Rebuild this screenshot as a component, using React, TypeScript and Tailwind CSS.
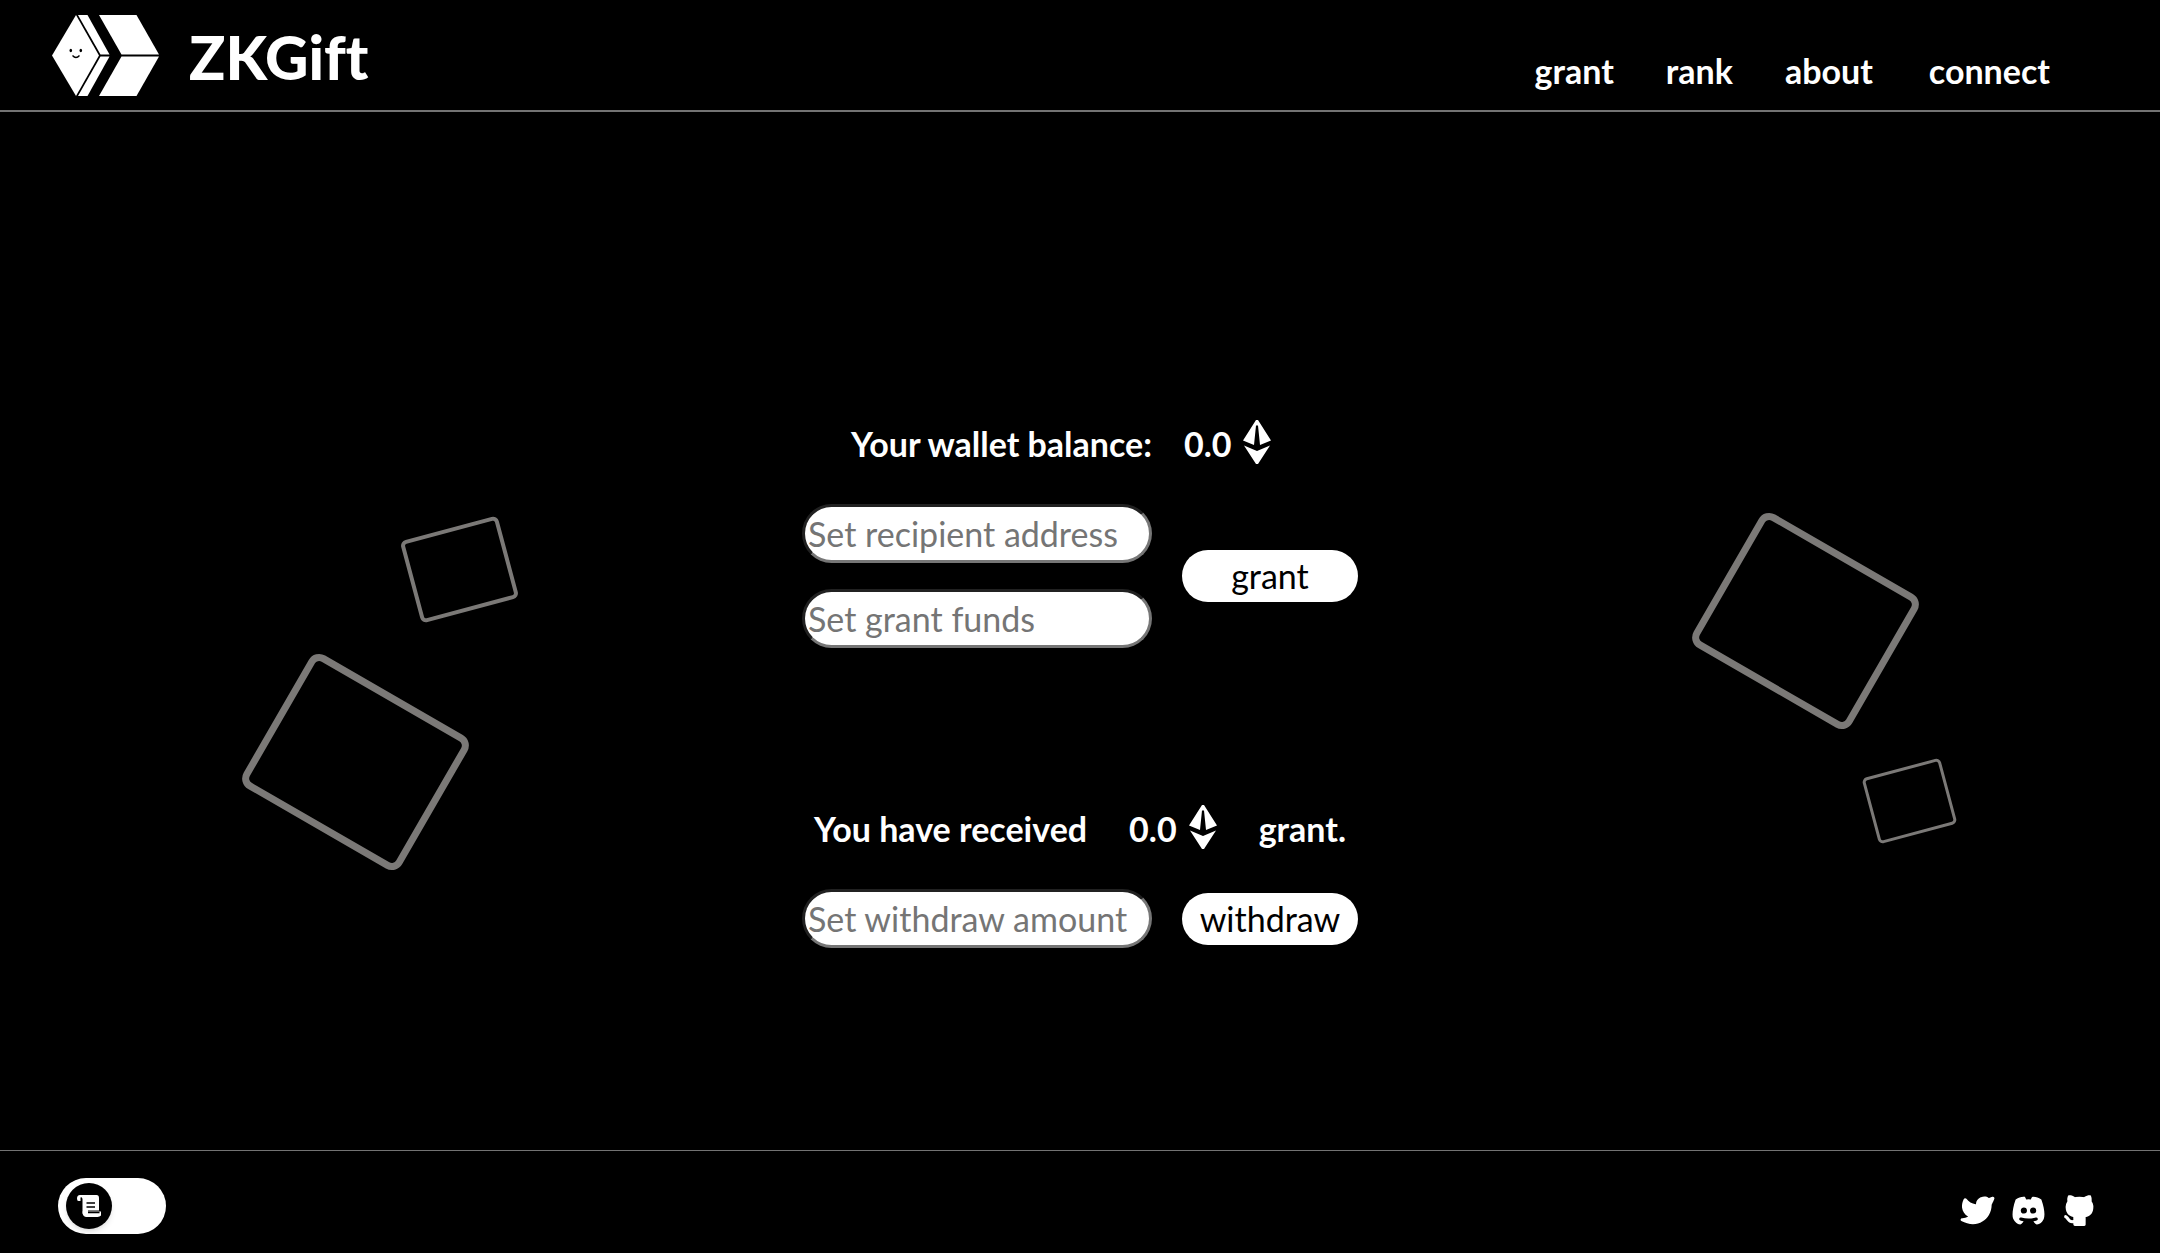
import { TbBrandTwitterFilled, TbBrandDiscordFilled, TbBrandGithubFilled } from "react-icons/tb";

function Logo() {
  return (
    <svg viewBox="0 0 107 81" className="h-[81px] w-[107px]" aria-hidden="true">
      <g fill="#fff">
        <path d="M24 0 0 40.500 24 81 47 40.500Z" />
        <path d="M26 0H35.500L57.500 39.500H48.500Z" />
        <path d="M48.500 41.500H57.500L35.500 81H26Z" />
        <path d="M47 0H84.500L107 39.500H69.500Z" />
        <path d="M69.500 41.500H107L84.500 81H47Z" />
      </g>
      <ellipse cx="18.800" cy="35.500" rx="1.300" ry="1.700" />
      <ellipse cx="28.800" cy="35.500" rx="1.300" ry="1.700" />
      <path d="M20.500 40.500Q24 44.500 27.500 40.500" fill="none" stroke="#000" strokeWidth="1.300" />
    </svg>
  );
}

function EthIcon() {
  return (
    <svg viewBox="0 0 28 44" className="h-11 w-7 shrink-0" fill="#fff" aria-label="ETH">
      <path d="M13 0H15L28 20.500 17 25 15 5.500H13L11 25 0 20.500Z" />
      <path d="M1 25.500 14 31 27 25.500 15 44H13Z" />
    </svg>
  );
}

function ScrollIcon() {
  return (
    <svg viewBox="0 0 24 22" className="h-[22px] w-6" aria-hidden="true">
      <path d="M3 0H19.500Q22 0 22 3V15.500H11V18H9Q5.500 22 5.500 17V4Q5 1.500 3.500 2.500V6H1.500Q0 6 0 3.500 0 0 3 0Z" fill="#fff" />
      <path d="M5.500 16.500H25V18.500Q24 22 20.500 22H9Q5.500 21.500 5.500 16.500Z" fill="#fff" />
      <path d="M9.500 8H18M9.500 12H18M11 17.500H22.500" stroke="#000" strokeWidth="1.600" />
    </svg>
  );
}

function Field({ id, label }: { id: string; label: string }) {
  return (
    <input
      id={id}
      aria-label={label}
      placeholder={label}
      className="h-[59px] w-[350px] rounded-full border-3 border-[#767676] bg-white px-[3px] text-[34px] text-black [border-style:inset] placeholder:text-[#757575]"
    />
  );
}

function Action({ children }: { children: string }) {
  return (
    <button type="button" className="h-[52px] w-44 rounded-full bg-white text-[34px] leading-none text-black">
      {children}
    </button>
  );
}

function Amount() {
  return (
    <span className="flex items-end gap-3">
      0.0
      <EthIcon />
    </span>
  );
}

export default function App() {
  return (
    <div className="flex min-h-screen flex-col bg-black font-['Lato',sans-serif] text-white">
      <header className="flex h-28 items-center justify-between border-b-2 border-[#737373] pr-[110px] pl-[52px]">
        <a href="#" className="flex items-center gap-[30px]">
          <Logo />
          <span className="pt-1 text-[60px] leading-none font-black [font-variant-ligatures:none]">ZKGift</span>
        </a>
        <nav className="flex gap-[52px] pt-8 text-[34px] leading-10 font-bold">
          <a href="#grant">grant</a>
          <a href="#rank">rank</a>
          <a href="#about">about</a>
          <button type="button" className="ml-1">connect</button>
        </nav>
      </header>

      <main className="flex grow justify-between">
        <div className="flex w-[560px] flex-col gap-[73px] pt-[415px] pl-[264px]" aria-hidden="true">
          <div className="ml-[145px] h-[85px] w-[101px] -rotate-15 rounded-[6px] border-4 border-[#7b7977]" />
          <div className="h-[154px] w-[183px] rotate-30 rounded-[12px] border-7 border-[#7b7977]" />
        </div>

        <div className="flex w-[556px] flex-col pt-[308px]">
          <form className="flex flex-col gap-10">
            <p className="flex h-11 items-end gap-8 pl-[49px] text-[34px] leading-10 font-bold whitespace-nowrap">
              Your wallet balance: <Amount />
            </p>
            <div className="flex items-center justify-between">
              <div className="flex flex-col gap-[26px]">
                <Field id="recipient" label="Set recipient address" />
                <Field id="funds" label="Set grant funds" />
              </div>
              <Action>grant</Action>
            </div>
          </form>
          <form className="mt-[157px] flex flex-col gap-10">
            <p className="flex h-11 items-end justify-between px-3 text-[34px] leading-10 font-bold whitespace-nowrap">
              <span>You have received</span> <Amount /> <span>grant.</span>
            </p>
            <div className="flex items-center justify-between">
              <Field id="withdraw" label="Set withdraw amount" />
              <Action>withdraw</Action>
            </div>
          </form>
        </div>

        <div className="flex w-[560px] flex-col gap-[69px] pt-[432px] pl-[114px]" aria-hidden="true">
          <div className="h-[154px] w-[183px] rotate-30 rounded-[12px] border-7 border-[#7b7977]" />
          <div className="ml-[155px] h-[68px] w-[81px] -rotate-15 rounded-[5px] border-3 border-[#7b7977]" />
        </div>
      </main>

      <footer className="flex h-[103px] items-center justify-between border-t border-[#737373] pr-[62px] pl-[58px]">
        <button type="button" role="switch" aria-checked="false" aria-label="Theme" className="mt-2 flex h-14 w-[108px] items-center rounded-full bg-white px-2">
          <span className="flex size-[46px] items-center justify-center rounded-full bg-black shadow-md">
            <ScrollIcon />
          </span>
        </button>
        <div className="flex gap-[14px] pt-4">
          <a href="#twitter" aria-label="Twitter"><TbBrandTwitterFilled size={37} /></a>
          <a href="#discord" aria-label="Discord"><TbBrandDiscordFilled size={37} /></a>
          <a href="#github" aria-label="GitHub"><TbBrandGithubFilled size={37} /></a>
        </div>
      </footer>
    </div>
  );
}
